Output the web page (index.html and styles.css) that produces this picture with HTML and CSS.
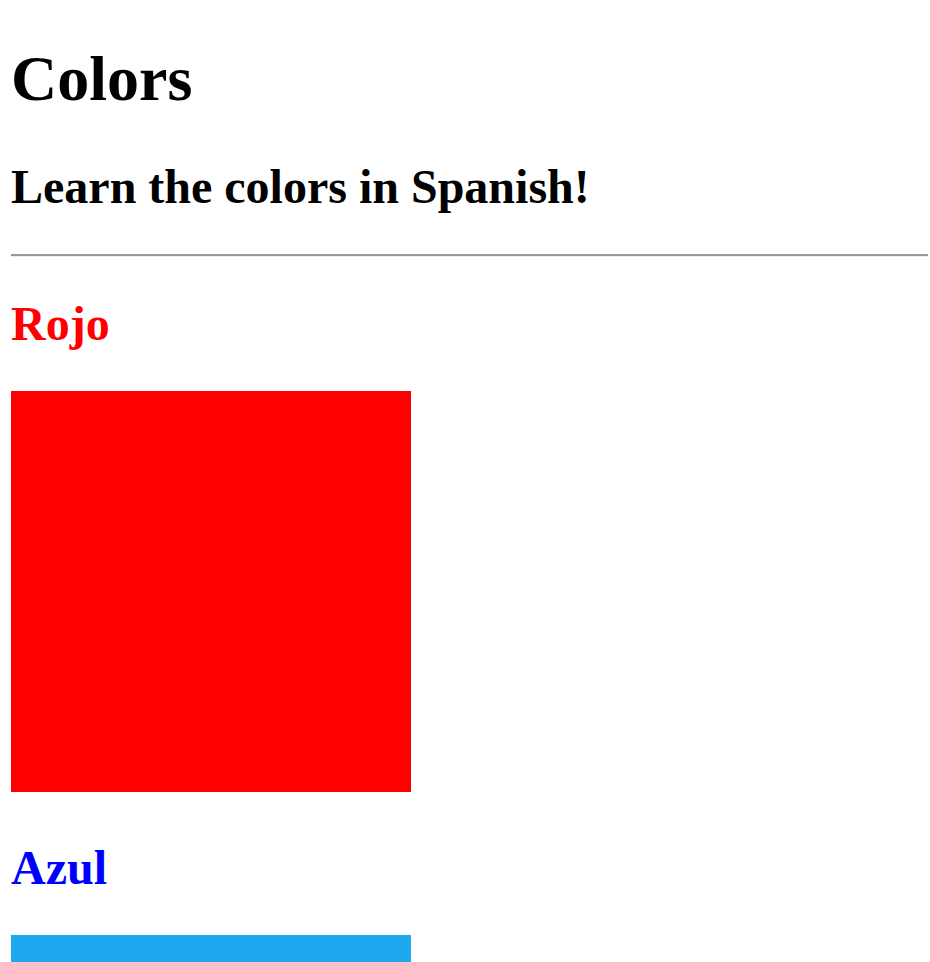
FILE: index.html
```html
<!DOCTYPE html>
<html lang="en">
<head>
<meta charset="utf-8">
<title>Colors</title>
<link rel="stylesheet" href="styles.css">
</head>
<body>
<h1 class="title">Colors</h1>
<h2 class="subtitle">Learn the colors in Spanish!</h2>
<hr class="rule">
<h2 class="color-name red-text">Rojo</h2>
<div class="swatch red"></div>
<h2 class="color-name blue-text">Azul</h2>
<div class="swatch blue"></div>
</body>
</html>
```
FILE: styles.css
```css
html, body {
  background: #ffffff;
}
body {
  margin: 11px 2px 11px 11px;
  font-family: "Liberation Serif", "Times New Roman", serif;
  color: #000000;
}
.title {
  font-size: 64px;
  font-weight: bold;
  margin: 31px 0 43px 0;
}
.subtitle {
  font-size: 48px;
  font-weight: bold;
  margin: 40px 0 40px 0;
}
.rule {
  margin: 8px 0;
  border: 0;
  border-top: 2px solid #999999;
  border-bottom: 1px solid #eeeeee;
  height: 0;
}
.color-name {
  font-size: 48px;
  font-weight: bold;
  margin: 39px 0 40px 0;
}
.red-text { color: #ff0000; }
.blue-text { color: #0000ff; }
.swatch {
  width: 400px;
  height: 401px;
  margin-bottom: 48px;
}
.red { background: #ff0000; }
.blue { background: #1ea8ee; }
```
